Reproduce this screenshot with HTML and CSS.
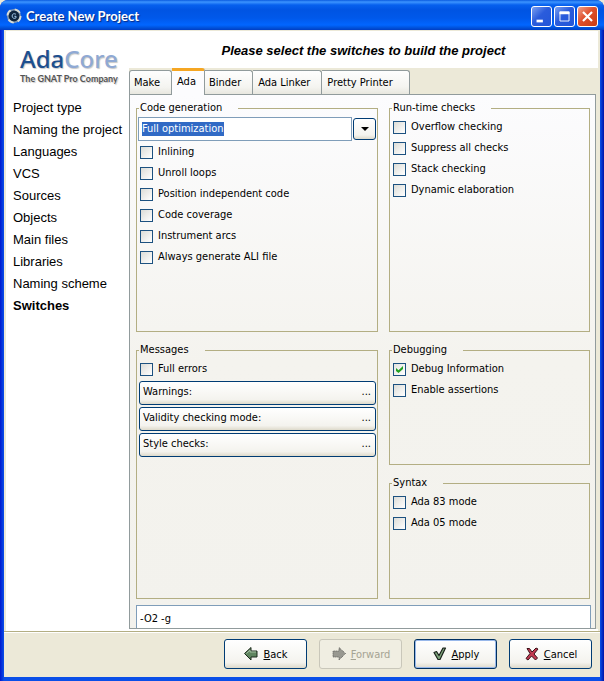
FILE: index.html
```html
<!DOCTYPE html>
<html lang="en">
<head>
<meta charset="utf-8">
<title>Create New Project</title>
<link rel="stylesheet" href="styles.css">
</head>
<body>
<div class="window">
  <header class="titlebar">
    <svg class="app-icon" viewBox="0 0 16 16" aria-hidden="true">
      <circle cx="8" cy="8" r="7" fill="#7f96b2"/>
      <circle cx="8" cy="8" r="6.5" fill="none" stroke="#d9dcd6" stroke-width="2" stroke-dasharray="6 4.2"/>
      <circle cx="8" cy="8" r="5.400" fill="#10263f"/>
      <path d="M10 6.500C9 5.300 6.200 5.300 6.200 8s2.800 2.700 3.800 1.800V8.300H8.400" fill="none" stroke="#a9d0f2"/>
    </svg>
    <h1 class="title">Create New Project</h1>
    <button class="win-btn" type="button" aria-label="Minimize"><svg viewBox="0 0 21 21"><path d="M5 14h7v3H5z" fill="#fff"/></svg></button>
    <button class="win-btn" type="button" aria-label="Maximize"><svg viewBox="0 0 21 21"><path d="M5.500 5.500h10v10h-10z" fill="none" stroke="#fff"/><path d="M5 5h11v3H5z" fill="#fff"/></svg></button>
    <button class="win-btn win-close" type="button" aria-label="Close"><svg viewBox="0 0 21 21"><path d="M5.500 5.500l10 10M15.500 5.500l-10 10" stroke="#fff" stroke-width="2.400"/></svg></button>
  </header>

  <div class="content">
    <nav class="sidebar">
      <div class="logo"><span class="logo-ada">Ada</span><span class="logo-core">Core</span></div>
      <div class="tagline">The GNAT Pro Company</div>
      <ul class="steps">
        <li>Project type</li>
        <li>Naming the project</li>
        <li>Languages</li>
        <li>VCS</li>
        <li>Sources</li>
        <li>Objects</li>
        <li>Main files</li>
        <li>Libraries</li>
        <li>Naming scheme</li>
        <li class="current">Switches</li>
      </ul>
    </nav>

    <main class="main">
      <h2 class="heading">Please select the switches to build the project</h2>
      <div class="notebook">
        <div class="tabs" role="tablist">
          <button class="tab" type="button" role="tab">Make</button>
          <button class="tab active" type="button" role="tab" aria-selected="true">Ada</button>
          <button class="tab" type="button" role="tab">Binder</button>
          <button class="tab tab-wide" type="button" role="tab">Ada Linker</button>
          <button class="tab tab-wide" type="button" role="tab">Pretty Printer</button>
        </div>
        <div class="pane">
          <div class="groups">
            <fieldset class="group codegen">
              <legend>Code generation</legend>
              <div class="combo">
                <div class="combo-field">
                  <select class="combo-select" aria-label="Optimization level"><option>Full optimization</option></select>
                </div>
                <button class="combo-btn" type="button" aria-label="Show levels"><svg viewBox="0 0 8 4"><path d="M0 0h8L4 4z"/></svg></button>
              </div>
              <label class="check"><input type="checkbox"><span>Inlining</span></label>
              <label class="check"><input type="checkbox"><span>Unroll loops</span></label>
              <label class="check"><input type="checkbox"><span>Position independent code</span></label>
              <label class="check"><input type="checkbox"><span>Code coverage</span></label>
              <label class="check"><input type="checkbox"><span>Instrument arcs</span></label>
              <label class="check"><input type="checkbox"><span>Always generate ALI file</span></label>
            </fieldset>
            <fieldset class="group">
              <legend>Run-time checks</legend>
              <label class="check"><input type="checkbox"><span>Overflow checking</span></label>
              <label class="check"><input type="checkbox"><span>Suppress all checks</span></label>
              <label class="check"><input type="checkbox"><span>Stack checking</span></label>
              <label class="check"><input type="checkbox"><span>Dynamic elaboration</span></label>
            </fieldset>
            <fieldset class="group messages">
              <legend>Messages</legend>
              <label class="check"><input type="checkbox"><span>Full errors</span></label>
              <div class="popups">
                <button class="popup" type="button"><span>Warnings:</span><span>...</span></button>
                <button class="popup" type="button"><span>Validity checking mode:</span><span>...</span></button>
                <button class="popup" type="button"><span>Style checks:</span><span>...</span></button>
              </div>
            </fieldset>
            <fieldset class="group">
              <legend>Debugging</legend>
              <label class="check"><input type="checkbox" checked><span>Debug Information</span></label>
              <label class="check"><input type="checkbox"><span>Enable assertions</span></label>
            </fieldset>
            <fieldset class="group">
              <legend>Syntax</legend>
              <label class="check"><input type="checkbox"><span>Ada 83 mode</span></label>
              <label class="check"><input type="checkbox"><span>Ada 05 mode</span></label>
            </fieldset>
          </div>
          <input class="switches" type="text" value="-O2 -g" aria-label="Switches">
        </div>
      </div>
    </main>
  </div>

  <footer class="actions">
    <button class="action" type="button">
      <svg viewBox="0 0 16 16"><path d="M1.500 7.500L8 1.500v3.500h6v6H8v3z" fill="#5f855f" stroke="#1c2a1c"/><path d="M3.500 7.500L7 4.200V6h6" fill="none" stroke="#a5c0a2"/></svg>
      <span><u>B</u>ack</span>
    </button>
    <button class="action" type="button" disabled>
      <svg viewBox="0 0 16 16"><path d="M14.500 7.500L8 1.500v3.500H2v6h6v3z" fill="#989890" stroke="#5c5c58" stroke-dasharray="1 1"/></svg>
      <span><u>F</u>orward</span>
    </button>
    <button class="action default" type="button">
      <svg viewBox="0 0 16 16"><path d="M2 6.500l2.500-1 2.500 4L11 2h2.500L8 13.500H6z" fill="#7da37a" stroke="#18201a" stroke-width="1.200" stroke-linejoin="round"/></svg>
      <span><u>A</u>pply</span>
    </button>
    <button class="action" type="button">
      <svg viewBox="0 0 16 16"><path d="M3 2.500h2.500l2.500 3.500 4-4 2 1-4 5 3.500 4-2 2-4-4-3.500 4-2-1.500 4-5z" fill="#c03a50" stroke="#3c1018" stroke-linejoin="round"/></svg>
      <span><u>C</u>ancel</span>
    </button>
  </footer>
</div>
</body>
</html>
```
FILE: styles.css
```css
* { box-sizing: border-box; }

body {
  margin: 0;
  background: #ece9d8;
  font: 11px/14px "DejaVu Sans Condensed", "DejaVu Sans", sans-serif;
  color: #000;
}

button, input, select {
  margin: 0;
  padding: 0;
  font: inherit;
  color: inherit;
}

.window {
  display: flex;
  flex-direction: column;
  min-height: 100vh;
  padding: 0 4px 4px;
  background: linear-gradient(90deg, #0019cf, #0a4fe8 4px, #0a4fe8 calc(100% - 4px), #0012a8);
  border-radius: 8px 8px 0 0;
}

/* Title bar */
.titlebar {
  display: flex;
  align-items: center;
  gap: 2px;
  height: 30px;
  margin: 0 -4px;
  padding: 2px 6px 0 6px;
  border-radius: 8px 8px 0 0;
  background: linear-gradient(#0a5be0 0, #3c94ff 2px, #0660ee 5px, #0054e3 10px, #0058ea 18px, #0166ff 25px, #0050d8 28px, #003dc4 30px);
}

.app-icon { width: 16px; height: 16px; }

.title {
  flex: 1;
  margin: 0 0 0 2px;
  font: bold 13px/18px "Lato", sans-serif;
  color: #fff;
  text-shadow: 1px 1px 1px #0a2a80;
}

.win-btn {
  width: 21px;
  height: 21px;
  border: 1px solid #fff;
  border-radius: 3px;
  background: linear-gradient(135deg, #7ba0f0, #2a5cdc 45%, #2356d8);
}

.win-close { background: linear-gradient(135deg, #f0a08a, #df4f2c 45%, #c83c12); }

.win-btn svg { display: block; width: 19px; height: 19px; }

/* Body */
.content {
  flex: 1;
  display: flex;
  padding: 0 2px 2px;
  background: #fff;
  border: solid #ece9d8;
  border-width: 1px 0 0;
  box-shadow: inset 2px 0 #ece9d8, inset -2px 0 #ece9d8;
}

.sidebar {
  flex: 0 0 123px;
  padding: 14px 0 0 7px;
}

.logo, .tagline {
  margin-left: 7px;
  white-space: nowrap;
  text-shadow: 1px 1px 1px #c8c8c8;
}

.logo { font: 500 24px/28px "Noto Sans", sans-serif; }
.logo-ada { color: #1d4f8f; }
.logo-core { color: #8fa9d4; }
.tagline { font: bold 9px/12px "Lato", sans-serif; color: #555; }

.steps {
  margin: 12px 0 0;
  padding: 0;
  list-style: none;
  font: 13px/22px "Liberation Sans", sans-serif;
  white-space: nowrap;
}

.steps .current { font-weight: bold; }

.main {
  flex: 1;
  display: flex;
  flex-direction: column;
  min-width: 0;
}

.heading {
  margin: 0;
  padding: 11px 0 8px;
  font: italic bold 13px/18px "Liberation Sans", sans-serif;
  text-align: center;
}

.notebook {
  flex: 1;
  display: flex;
  flex-direction: column;
  background: #ece9d8;
}

.tabs {
  display: flex;
  align-items: flex-end;
  height: 26px;
}

.tab {
  height: 24px;
  padding: 0 11px 0 4px;
  border: solid #919b9c;
  border-width: 1px 1px 0 0;
  border-radius: 0 3px 0 0;
  background: linear-gradient(#fefefe, #f4f4f0 70%, #e8e7df);
  white-space: nowrap;
}

.tab:first-child { border-left-width: 1px; border-radius: 3px 3px 0 0; }
.tab-wide { padding-left: 5px; }
.tab:last-child { padding-right: 16px; }

.tab.active {
  height: 27px;
  margin-bottom: -1px;
  padding: 0 8px 2px 5px;
  border-top: 3px solid #f5a623;
  background: #fcfcfe;
  z-index: 1;
}

.pane {
  flex: 1;
  display: flex;
  flex-direction: column;
  gap: 6px;
  margin-right: 2px;
  padding: 6px 4px 0 6px;
  border: 1px solid #919b9c;
  background: linear-gradient(#fcfcfe, #f4f3ee 50%, #f3f2ed);
}

.groups {
  flex: 1;
  display: grid;
  grid-template-columns: 242fr 201fr;
  grid-template-rows: 231fr 122fr 123fr;
  gap: 11px;
  margin-right: 1px;
}

.messages { grid-row: 2 / 4; }

.group {
  min-width: 0;
  margin: 0;
  padding: 2px 1px 1px;
  border: 1px solid #b3ae83;
}

.group legend {
  margin-left: 1px;
  padding: 0 16px 0 1px;
}

.check {
  display: flex;
  align-items: center;
  gap: 5px;
  height: 21px;
  padding-left: 2px;
}

.check span { padding-bottom: 2px; }

.check input {
  appearance: none;
  width: 13px;
  height: 13px;
  border: 1px solid #1c5180;
  background: linear-gradient(135deg, #dcdcd7, #fff);
}

.check input:checked {
  background: linear-gradient(135deg, #e4e4df, #fff);
}

.check input:checked::before {
  content: "";
  display: block;
  width: 7px;
  height: 7px;
  margin: 2px;
  background: #21a121;
  clip-path: polygon(0 28%, 36% 60%, 100% 0, 100% 42%, 36% 100%, 0 70%);
}

.combo {
  display: flex;
  align-items: center;
  gap: 1px;
  margin-bottom: 1px;
}

.combo-field {
  flex: 1;
  display: flex;
  align-items: center;
  height: 24px;
  padding-left: 3px;
  border: 1px solid #7f9db9;
  background: #fff;
}

.combo-select {
  appearance: none;
  field-sizing: content;
  border: 0;
  background: #316ac5;
  color: #fff;
}

.combo-btn {
  display: grid;
  place-items: center;
  width: 23px;
  height: 22px;
}

.combo-btn svg { width: 8px; height: 4px; }

.combo-btn, .popup, .action {
  border: 1px solid #003c74;
  border-radius: 3px;
  background: linear-gradient(#fff, #f4f3ee 80%, #dedacb);
}

.popups {
  display: grid;
  gap: 2px;
  margin: 1px 0 0 1px;
}

.popup {
  display: flex;
  justify-content: space-between;
  align-items: center;
  height: 24px;
  padding: 0 4px 2px 3px;
}

.switches {
  width: 100%;
  height: 23px;
  padding: 2px 3px 0;
  border: solid #7f9db9;
  border-width: 1px 1px 0;
  background: #fff;
}

/* Bottom buttons */
.actions {
  display: flex;
  justify-content: flex-end;
  gap: 12px;
  padding: 7px 8px 8px;
  border-top: 1px solid #b3ae83;
  background: #ece9d8;
  box-shadow: inset 0 1px #fff;
}

.action {
  display: flex;
  justify-content: center;
  align-items: center;
  gap: 4px;
  width: 83px;
  height: 30px;
}

.action span { padding-top: 2px; }

.action svg { width: 16px; height: 16px; }

.action.default { box-shadow: inset 0 0 0 1px #98b8ea; border-color: #00305f; }

.action:disabled {
  border-color: #c9c7ba;
  background: #f0eee2;
  color: #a5a393;
}
```
